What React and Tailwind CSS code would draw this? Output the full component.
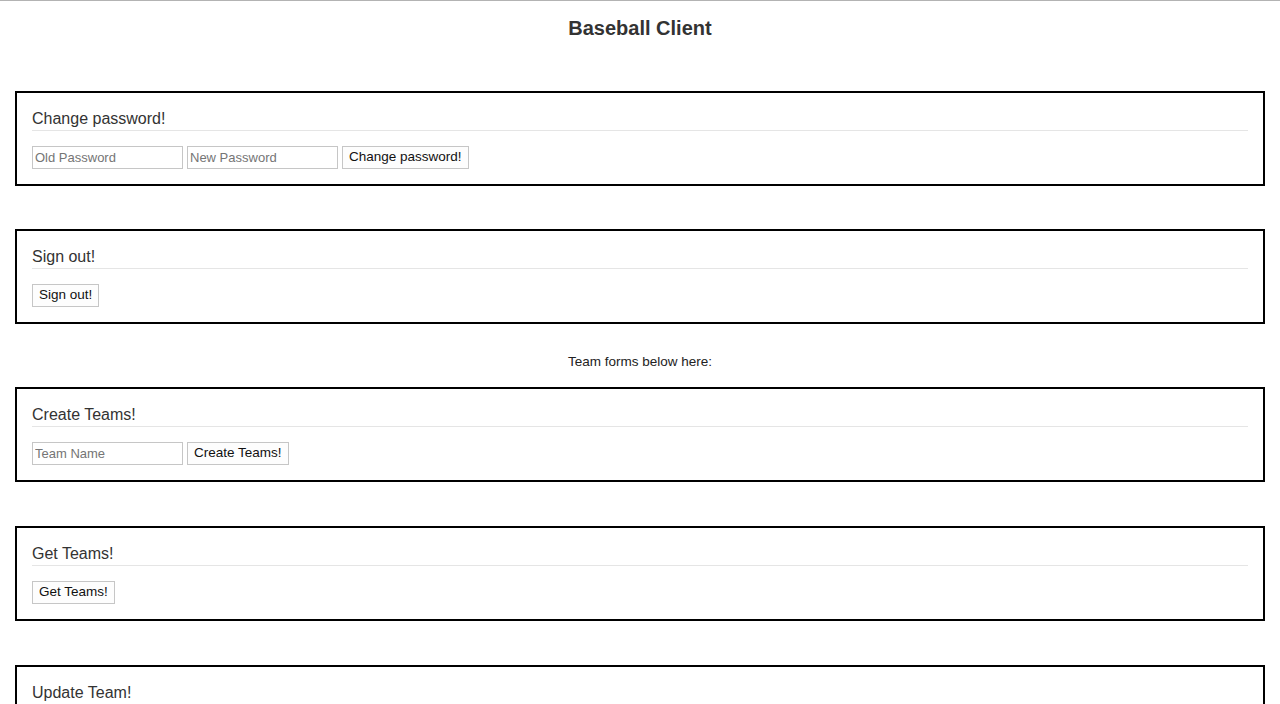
import React from 'react';

const font = { fontFamily: '"Liberation Sans", Arial, sans-serif' };

const Field = ({ placeholder }) => (
  <input
    type="text"
    placeholder={placeholder}
    className="w-[151px] h-[23px] px-[2px] border border-[#c6c6c6] text-[13px] text-[#333] placeholder:text-[#757575] outline-none"
  />
);

const Btn = ({ children }) => (
  <button className="h-[23px] px-[6px] border border-[#c6c6c6] bg-[#fdfdfd] text-[13.5px] text-[#111]">
    {children}
  </button>
);

const FormBox = ({ title, children, className = '' }) => (
  <fieldset className={`mx-[15px] border-2 border-black p-[15px] ${className}`}>
    <div className="text-[16px] leading-[22px] text-[#333] border-b border-[#e5e5e5] mb-[15px]">
      {title}
    </div>
    <form className="flex items-center gap-[4px]" onSubmit={(e) => e.preventDefault()}>
      {children}
    </form>
  </fieldset>
);

export default function App() {
  return (
    <div className="min-h-screen bg-white border-t border-[#b3b3b3] pb-10" style={font}>
      <h1 className="pt-[15px] text-center text-[20px] leading-[24px] font-bold text-[#333]">
        Baseball Client
      </h1>

      <FormBox title="Change password!" className="mt-[51px]">
        <Field placeholder="Old Password" />
        <Field placeholder="New Password" />
        <Btn>Change password!</Btn>
      </FormBox>

      <FormBox title="Sign out!" className="mt-[43px]">
        <Btn>Sign out!</Btn>
      </FormBox>

      <p className="mt-[30px] mb-[17px] text-center text-[13.5px] leading-[16px] text-[#222]">
        Team forms below here:
      </p>

      <FormBox title="Create Teams!">
        <Field placeholder="Team Name" />
        <Btn>Create Teams!</Btn>
      </FormBox>

      <FormBox title="Get Teams!" className="mt-[44px]">
        <Btn>Get Teams!</Btn>
      </FormBox>

      <FormBox title="Update Team!" className="mt-[44px]">
        <Field placeholder="Team ID" />
        <Field placeholder="Team Name" />
        <Btn>Update Team!</Btn>
      </FormBox>
    </div>
  );
}
